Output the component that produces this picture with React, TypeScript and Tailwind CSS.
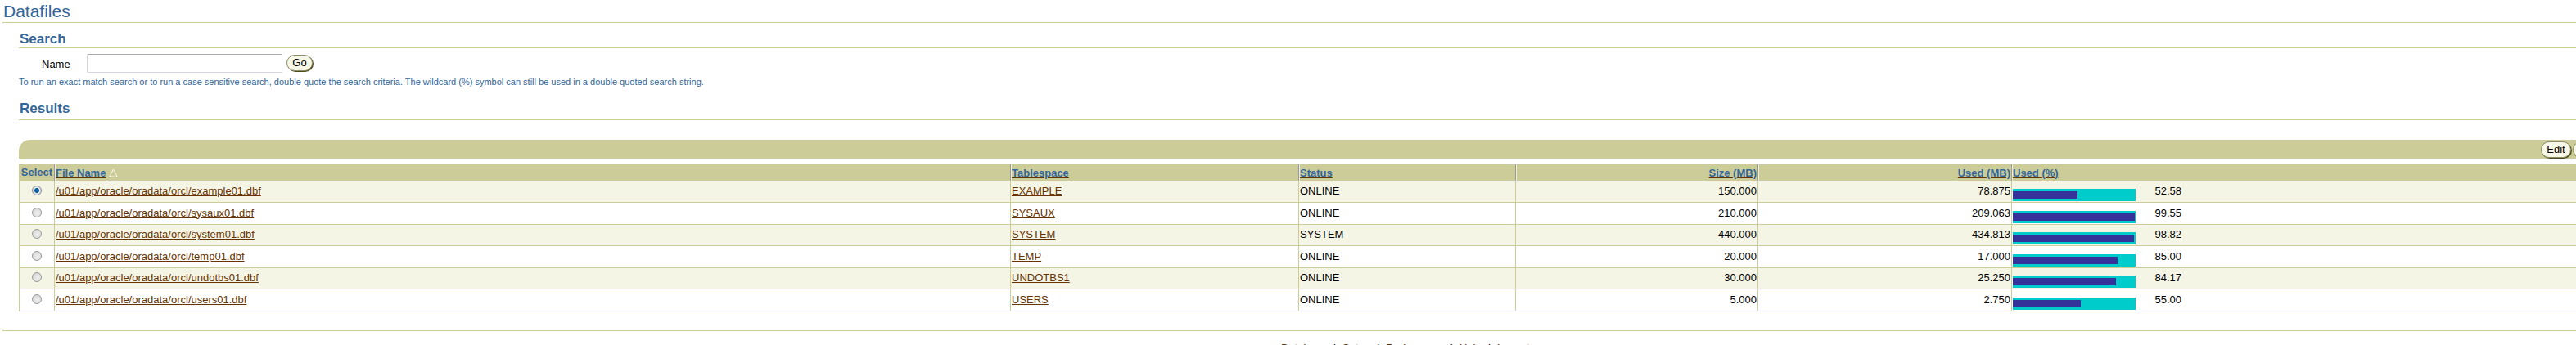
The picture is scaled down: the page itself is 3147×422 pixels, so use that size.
const rows = [
  { file: "/u01/app/oracle/oradata/orcl/example01.dbf", ts: "EXAMPLE", status: "ONLINE", size: "150.000", used: "78.875", pct: "52.58", h: "h-[26px]", tint: true },
  { file: "/u01/app/oracle/oradata/orcl/sysaux01.dbf", ts: "SYSAUX", status: "ONLINE", size: "210.000", used: "209.063", pct: "99.55", h: "h-[27px]", tint: false },
  { file: "/u01/app/oracle/oradata/orcl/system01.dbf", ts: "SYSTEM", status: "SYSTEM", size: "440.000", used: "434.813", pct: "98.82", h: "h-[26px]", tint: true },
  { file: "/u01/app/oracle/oradata/orcl/temp01.dbf", ts: "TEMP", status: "ONLINE", size: "20.000", used: "17.000", pct: "85.00", h: "h-[27px]", tint: false },
  { file: "/u01/app/oracle/oradata/orcl/undotbs01.dbf", ts: "UNDOTBS1", status: "ONLINE", size: "30.000", used: "25.250", pct: "84.17", h: "h-[26px]", tint: true },
  { file: "/u01/app/oracle/oradata/orcl/users01.dbf", ts: "USERS", status: "ONLINE", size: "5.000", used: "2.750", pct: "55.00", h: "h-[27px]", tint: false },
];

const thClass = "border-t border-b border-l border-[#999999] bg-[#cccc99] p-0 pl-[1px] text-left align-middle font-bold shadow-[inset_1px_0_0_#eeeedd]";
const tdClass = "border-b border-l border-[#cccc99] p-0 pb-[2px] pl-[1px] pr-[2px] align-middle";

function SortLink({ children }: { children: React.ReactNode }) {
  return <a href="#" className="text-[#336699] underline decoration-[#663300]">{children}</a>;
}

function RowLink({ children }: { children: React.ReactNode }) {
  return <a href="#" className="text-[#663300] underline">{children}</a>;
}

function Pill({ children, className }: { children: React.ReactNode; className: string }) {
  return (
    <button className={`flex shrink-0 items-center justify-center rounded-full border border-[#8c8c66] bg-[#f7f7e7] text-[13px] leading-none text-black shadow-[1px_1px_0_#4d4d1f] ${className}`}>
      {children}
    </button>
  );
}

export default function App() {
  return (
    <div className="h-[422px] w-[3147px] overflow-hidden bg-white font-['Liberation_Sans',Arial,sans-serif] text-[13px] text-black">
      <div className="w-[3470px]">
        <h1 className="ml-[3px] h-[28px] border-b border-[#cccc99] pl-[1px] text-[21px] leading-[27px] text-[#336699]">Datafiles</h1>

        <div className="ml-[23px]">
          <h2 className="h-[31px] border-b border-[#cccc99] pl-[1px] pt-[10px] text-[17px] font-bold leading-[20px] text-[#336699]">Search</h2>

          <div className="mt-[7px] flex h-[23px] items-center">
            <label className="ml-[28px] w-[55px] pt-[2px]">Name</label>
            <input className="h-[23px] w-[239px] rounded-[2px] border border-[#d5d5e0] border-t-[#aaaab5] bg-white" />
            <Pill className="ml-[5px] mb-[2px] h-[20px] w-[32px]">Go</Pill>
          </div>

          <p className="mt-[4px] text-[11px] leading-[15px] text-[#336699]">
            To run an exact match search or to run a case sensitive search, double quote the search criteria. The wildcard (%) symbol can still be used in a double quoted search string.
          </p>

          <h2 className="mt-[11px] h-[28px] border-b border-[#cccc99] pl-[1px] pt-[4px] text-[17px] font-bold leading-[20px] text-[#336699]">Results</h2>

          <div className="mt-[24px] flex h-[23px] items-center gap-[2px] rounded-tl-[14px] bg-[#cccc99] pl-[3081px]">
            <Pill className="h-[20px] w-[37px]">Edit</Pill>
            <Pill className="h-[20px] w-[38px]">View</Pill>
          </div>

          <table className="mt-[6px] table-fixed border-separate border-spacing-0 leading-[15px]">
            <colgroup>
              <col className="w-[43px]" />
              <col className="w-[1168px]" />
              <col className="w-[352px]" />
              <col className="w-[265px]" />
              <col className="w-[296px]" />
              <col className="w-[310px]" />
              <col className="w-[1000px]" />
            </colgroup>
            <thead>
              <tr className="h-[22px]">
                <th className="border-b border-b-[#cccc99] border-l border-l-[#cccc99] bg-[#cccc99] p-0 text-center font-bold text-[#336699]">Select</th>
                <th className={thClass}>
                  <span className="inline-flex items-center gap-[4px]">
                    <SortLink>File Name</SortLink>
                    <svg width="11" height="11" viewBox="0 0 11 11" fill="none" aria-hidden="true">
                      <path d="M5.5 1 L10.2 10 L0.8 10 Z" stroke="#fafae6" strokeWidth="1" />
                    </svg>
                  </span>
                </th>
                <th className={thClass}><SortLink>Tablespace</SortLink></th>
                <th className={thClass}><SortLink>Status</SortLink></th>
                <th className={`${thClass} pr-[1px] !text-right`}><SortLink>Size (MB)</SortLink></th>
                <th className={`${thClass} pr-[1px] !text-right`}><SortLink>Used (MB)</SortLink></th>
                <th className={thClass}><SortLink>Used (%)</SortLink></th>
              </tr>
            </thead>
            <tbody>
              {rows.map((row, i) => (
                <tr key={row.file} className={`${row.h} ${row.tint ? "bg-[#f5f5e6]" : "bg-white"}`}>
                  <td className={`${tdClass} text-center`}>
                    <input
                      type="radio"
                      name="datafile"
                      defaultChecked={i === 0}
                      className="mx-auto mb-[1px] block h-[12px] w-[12px] appearance-none rounded-full border border-[#9a9a9a] bg-[radial-gradient(circle_at_60%_60%,#f0f0f0_0%,#dcdcdc_60%,#c4c4c4_100%)] checked:border-[#8a8a9a] checked:bg-[radial-gradient(circle,#0f6da3_0%,#0a5f96_36%,#e8e8f0_48%,#d0d0d8_100%)]"
                    />
                  </td>
                  <td className={tdClass}><RowLink>{row.file}</RowLink></td>
                  <td className={tdClass}><RowLink>{row.ts}</RowLink></td>
                  <td className={tdClass}>{row.status}</td>
                  <td className={`${tdClass} !pr-[1px] text-right`}>{row.size}</td>
                  <td className={`${tdClass} !pr-[1px] text-right`}>{row.used}</td>
                  <td className={`${tdClass} !pb-0`}>
                    <div className="flex items-center">
                      <div className="mt-[8px] flex h-[15px] w-[150px] items-center bg-[#00cccc]">
                        <div className="h-[9px] bg-[#333399]" style={{ width: `${parseFloat(row.pct)}%` }} />
                      </div>
                      <span className="mb-[2px] w-[56px] text-right">{row.pct}</span>
                    </div>
                  </td>
                </tr>
              ))}
            </tbody>
          </table>
        </div>

        <div className="ml-[3px] mt-[23px] border-b border-[#cccc99]" />
        <div className="pl-[1565px] pt-[13px] leading-[15px]">
          <a href="#" className="text-[#663300]">Database</a>
          <span className="px-[8px]">|</span>
          <a href="#" className="text-[#663300]">Setup</a>
          <span className="px-[8px]">|</span>
          <a href="#" className="text-[#663300]">Preferences</a>
          <span className="px-[8px]">|</span>
          <a href="#" className="text-[#663300]">Help</a>
          <span className="px-[8px]">|</span>
          <a href="#" className="text-[#663300]">Logout</a>
        </div>
      </div>
    </div>
  );
}
